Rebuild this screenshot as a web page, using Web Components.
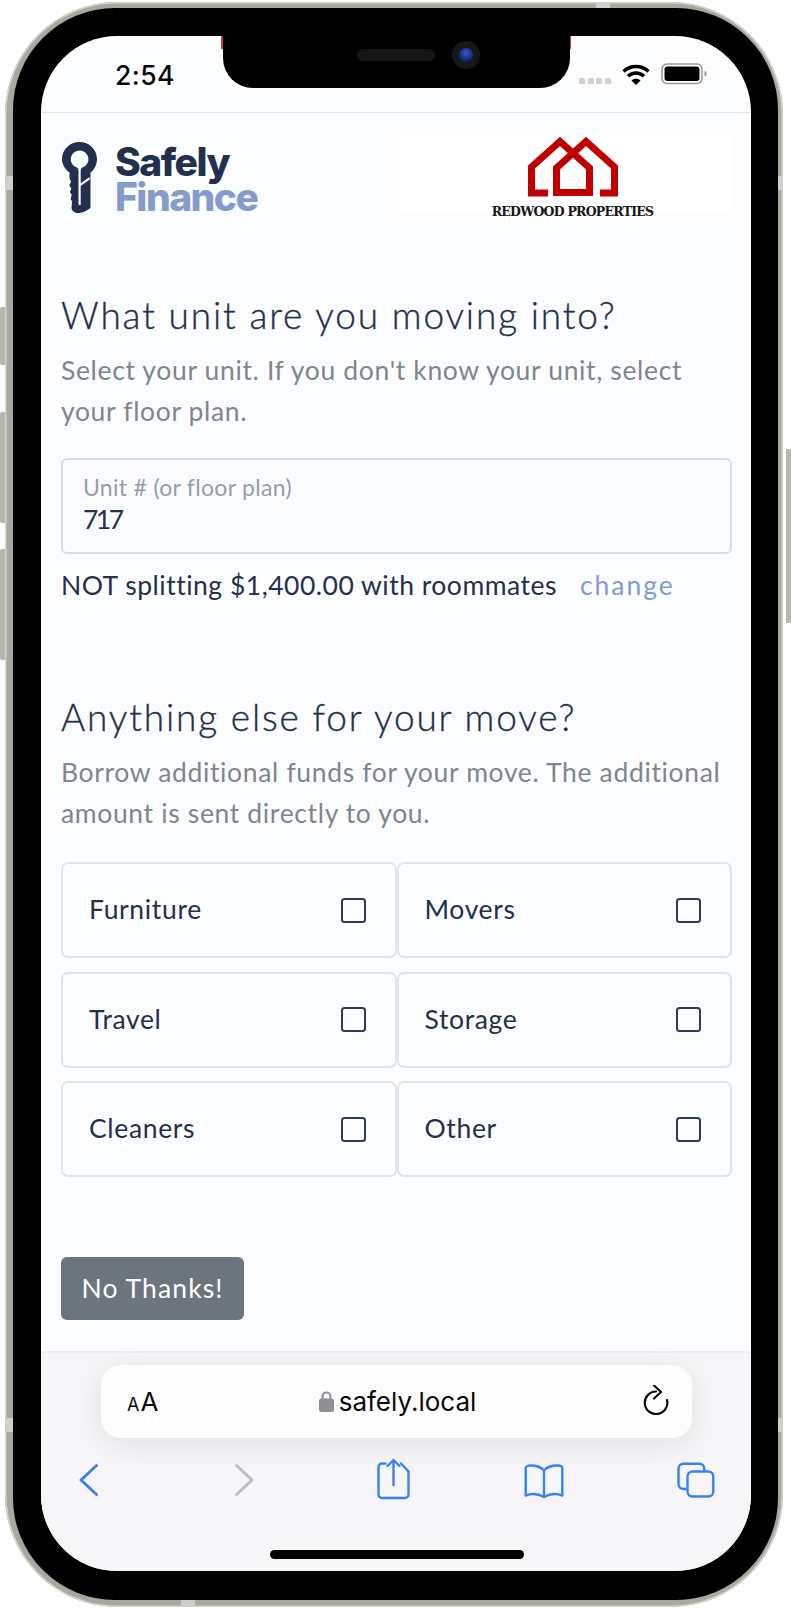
<!DOCTYPE html>
<html><head><meta charset="utf-8"><title>Safely Finance</title>
<style>
html,body{margin:0;padding:0;background:#fff;height:1608px;overflow:hidden}
body{font-family:"Lato","Noto Sans",sans-serif;color:#232f4d}
</style></head><body>
<phone-frame>
  <status-bar slot="status"></status-bar>
  <app-header></app-header>
  <form-section heading="What unit are you moving into?" top="0">Select your unit. If you don't know your unit, select your floor plan.</form-section>
  <unit-field label="Unit # (or floor plan)" value="717"></unit-field>
  <split-note text="NOT splitting $1,400.00 with roommates" link="change"></split-note>
  <form-section heading="Anything else for your move?" top="90">Borrow additional funds for your move. The additional amount is sent directly to you.</form-section>
  <choice-grid>
    <choice-card>Furniture</choice-card><choice-card>Movers</choice-card>
    <choice-card>Travel</choice-card><choice-card>Storage</choice-card>
    <choice-card>Cleaners</choice-card><choice-card>Other</choice-card>
  </choice-grid>
  <plain-button>No Thanks!</plain-button>
  <safari-bar slot="bar"></safari-bar>
</phone-frame>
<script>
function def(name, css, html){
  customElements.define(name, class extends HTMLElement{
    connectedCallback(){
      if(this.shadowRoot) return;
      const r=this.attachShadow({mode:'open'});
      const get=k=>this.getAttribute(k)||'';
      r.innerHTML='<style>'+css+'</style>'+(typeof html==='function'?html(get):html);
    }
  });
}
def('phone-frame',`
:host{display:block;position:relative;width:791px;height:1608px;box-sizing:border-box;padding:2px 8px 1px 5px}
.frame{box-sizing:border-box;height:1605px;background:#a7a89e;border-radius:112px;padding:6px 5px 7px 8px;box-shadow:inset 0 0 0 1.5px #d4d5cf}
.black{box-sizing:border-box;height:100%;background:#000;border-radius:102px;padding:28px 27px 29px 28px}
.screen{position:relative;height:100%;border-radius:76px;overflow:hidden;background:#fcfdff;display:flex;flex-direction:column}
.main{flex:1;min-height:0;padding:0 19px 0 20px;display:flex;flex-direction:column}
.notch{position:absolute;left:182px;top:0;width:347px;height:52px;background:#000;border-radius:0 0 30px 30px}
.red{position:absolute;top:0;width:2px;height:13px;background:#d0392b}
.speaker{position:absolute;left:134px;top:13px;width:78px;height:12px;border-radius:6px;background:#151515}
.cam{position:absolute;left:229px;top:5px;width:28px;height:28px;border-radius:50%;background:#15171c}
.cam i{position:absolute;left:7px;top:7px;width:14px;height:14px;border-radius:50%;background:radial-gradient(circle at 50% 35%,#3a56c0 0,#1b2c80 55%,#0a1030 100%)}
.btn{position:absolute;left:0;width:5px;background:#b4b5ac;border-radius:2px 0 0 2px}
.rbtn{position:absolute;right:0;top:449px;width:5px;height:174px;background:#b4b5ac;border-radius:0 2px 2px 0}
.band{position:absolute;background:#cfd0ca}
`,`<div class="btn" style="top:307px;height:58px"></div><div class="btn" style="top:412px;height:111px"></div><div class="btn" style="top:549px;height:111px"></div><div class="rbtn"></div>
<div class="band" style="left:5px;top:176px;width:8px;height:14px"></div><div class="band" style="left:5px;top:1418px;width:8px;height:14px"></div>
<div class="band" style="left:778px;top:176px;width:5px;height:14px"></div><div class="band" style="left:778px;top:1418px;width:5px;height:14px"></div>
<div class="band" style="left:596px;top:2px;width:14px;height:6px"></div><div class="band" style="left:181px;top:1600px;width:14px;height:7px"></div>
<div class="frame"><div class="black"><div class="screen">
<slot name="status"></slot>
<div class="main"><slot></slot></div>
<slot name="bar"></slot>
<div class="red" style="left:180px"></div><div class="red" style="left:528px"></div>
<div class="notch"><div class="speaker"></div><div class="cam"><i></i></div></div>
</div></div></div>`);

def('status-bar',`
:host{display:flex;flex:none;box-sizing:border-box;height:77px;border-bottom:1px solid #e4e6ea;padding:23px 47px 0 74px;align-items:flex-start;font-family:Inter,sans-serif}
.t{font-size:26.500px;font-weight:500;line-height:32px;color:#0a0a0a;letter-spacing:.4px}
.r{margin-left:auto;display:flex;align-items:flex-start;gap:0;margin-top:-1px}
.dots{display:flex;gap:2.700px;margin:20px 11px 0 0}.dots i{width:6px;height:6px;border-radius:1.500px;background:#d0d0d2}
svg{display:block}
`,`<div class="t">2:54</div><div class="r"><div class="dots"><i></i><i></i><i></i><i></i></div>
<svg width="28" height="22" viewBox="0 0 28 22" style="margin:6px 11px 0 0"><path d="M1.500 7.500C8.500 .8 19.500 .8 26.500 7.500" fill="none" stroke="#000" stroke-width="3.400"/><path d="M6 12.200C10.600 8 17.400 8 22 12.200" fill="none" stroke="#000" stroke-width="3.400"/><path d="M14 21l-4.600-4.600c2.600-2.200 6.600-2.200 9.200 0z" fill="#000"/></svg>
<svg width="47" height="22" viewBox="0 0 47 22" style="margin:5px -4px 0 0"><rect x="1" y="1" width="40" height="19.500" rx="5" fill="none" stroke="#9a9a9a" stroke-width="1.600"/><rect x="3.500" y="3.500" width="35" height="14.500" rx="3" fill="#000"/><path d="M43.500 8c1.600.5 2 1.400 2 2.700s-.4 2.200-2 2.700z" fill="#9a9a9a"/></svg></div>`);

def('app-header',`
:host{display:flex;flex:none;height:180px;box-sizing:border-box;align-items:flex-start;justify-content:space-between;padding-top:21px}
.l{display:flex;margin:8px 0 0 1px;gap:18px}
.w{font-family:Inter,sans-serif;font-weight:800;font-size:39px;line-height:35px;letter-spacing:-1.500px;padding-top:2px}
.w span{display:block;color:#232f4d}.w b{display:block;font-weight:800;color:#859bcb}
.box{box-sizing:border-box;width:338px;height:77px;background:#fff;padding-top:3px;display:flex;flex-direction:column;align-items:center}
.box svg{display:block;flex:none;margin-left:26px}
.n{font-family:"DejaVu Serif",serif;font-weight:700;font-size:12.500px;line-height:16px;margin-top:7px;color:#161616;white-space:nowrap;margin-left:19px;letter-spacing:-.75px}
`,`<div class="l"><svg width="35" height="72" viewBox="0 0 35 72" style="display:block"><path fill="#232f4d" fill-rule="evenodd" d="M17.500 0C27 0 35 7.500 35 17c0 6-3 11-6.500 13.500V66c-3 2-6 4.500-11 5-4.500.4-8-2-8-5.500l.6-6-1.600-2.500 1.300-4-2-3 1.600-3.500-2.200-3 1.800-3.500L7.500 36v-5.500C3 27 0 22.500 0 17 0 7.500 8 0 17.500 0zM17.500 8.500a8.700 8.700 0 0 0-3.200 16.800c1.500.6 2.200 1.500 2.200 3V63h2.200V44l9-6.500v-2.500l-9 6.200V28.300c0-1.500.7-2.400 2.200-3a8.700 8.700 0 0 0-3.400-16.800z"/></svg>
<div class="w"><span>Safely</span><b>Finance</b></div></div>
<div class="box"><svg width="96" height="60" viewBox="0 0 96 60"><path d="M20 56H3.500V30L32 4.500 61.500 31V55.500H28.500V31L58 4.500 86.500 30V56H72" fill="none" stroke="#c00000" stroke-width="7" stroke-linejoin="miter"/></svg><div class="n">REDWOOD PROPERTIES</div></div>`);

def('form-section',`
:host{display:block;flex:none}
h2{margin:0;font-weight:300;font-size:37px;line-height:44px;color:#232f4d;letter-spacing:1.850px;-webkit-text-stroke:.35px #232f4d}
p{margin:13px 0 0;font-size:26.500px;line-height:40.500px;color:#7f858e;letter-spacing:.65px}
`,g=>`<style>:host{margin-top:${g('top')}px}</style><h2>${g('heading')}</h2><p><slot></slot></p>`);

def('unit-field',`
:host{display:block;flex:none;box-sizing:border-box;height:96px;margin-top:27px;border:2px solid #d9dce2;border-radius:6px;padding:13px 20px 0;background:#fbfcfe}
.l{font-size:23px;line-height:28px;color:#969cab;letter-spacing:.3px}
.v{font-size:26.500px;line-height:32px;color:#232f4d;margin-top:2px;letter-spacing:-2.500px}
`,g=>`<div class="l">${g('label')}</div><div class="v">${g('value')}</div>`);

def('split-note',`
:host{display:flex;flex:none;margin-top:11px;height:40px;align-items:center;font-size:26.500px;letter-spacing:.5px;gap:23px;color:#232f4d}
.c{color:#859bcb;letter-spacing:2px}
`,g=>`<span>${g('text')}</span><span class="c">${g('link')}</span>`);

def('choice-grid',`
:host{display:grid;flex:none;margin-top:29px;grid-template-columns:1fr 1fr;grid-auto-rows:96px;row-gap:13.500px}
`,`<slot></slot>`);

def('choice-card',`
:host{display:flex;box-sizing:border-box;align-items:center;justify-content:space-between;border:2px solid #e2e4e8;border-radius:7px;padding:0 29px 0 26px;font-size:26.500px;letter-spacing:.65px;color:#232f4d}
span{padding-bottom:2px}
.c{box-sizing:border-box;width:25px;height:25px;border:2.500px solid #2d3a58;border-radius:3.500px}
`,`<span><slot></slot></span><div class="c"></div>`);

def('plain-button',`
:host{display:flex;flex:none;align-self:flex-start;margin-top:80px;box-sizing:border-box;width:183px;height:63px;padding-bottom:2px;align-items:center;justify-content:center;background:#6c757d;border-radius:6px;color:#fff;font-size:26.500px;letter-spacing:1.100px}
`,`<slot></slot>`);

def('safari-bar',`
:host{display:block;flex:none;box-sizing:border-box;height:220px;position:relative;background:#f6f6f8;border-top:2px solid #eeeef0;font-family:Inter,sans-serif}
.pill{box-sizing:border-box;margin:12px 59px 0 60px;height:73px;border-radius:20px;background:#fdfdfd;box-shadow:0 6px 30px rgba(0,0,0,.09);display:flex;align-items:center;padding:0 22px 0 26px;color:#0a0a0a}
.aa{width:70px;white-space:nowrap;font-size:26px}.aa small{font-size:18px;margin-right:1px}
.u{flex:1;display:flex;align-items:center;justify-content:center;gap:5px;font-size:26px;margin-left:-44px}
.row{display:flex;justify-content:space-between;padding:0 25.500px 0 18px;margin-top:12px}
.row svg{display:block;width:60px;height:60px}
.home{position:absolute;left:229px;top:197px;width:254px;height:9px;border-radius:5px;background:#000}
`,`<div class="pill"><div class="aa"><small>A</small>A</div>
<div class="u"><svg width="15" height="21" viewBox="0 0 15 21"><path d="M3.500 8V5.500a4 4 0 0 1 8 0V8" fill="none" stroke="#8e8e93" stroke-width="2"/><rect y="7.500" width="15" height="13.500" rx="2.500" fill="#8e8e93"/></svg><span>safely.local</span></div>
<svg width="28" height="30" viewBox="0 0 28 30" style="margin-top:-4px"><path d="M14 6.500A11.300 11.300 0 1 0 25 15" fill="none" stroke="#0a0a0a" stroke-width="2.200" stroke-linecap="round"/><path d="M12 .5L19 7l-7 6.500" fill="none" stroke="#0a0a0a" stroke-width="2.200" stroke-linecap="round" stroke-linejoin="round"/></svg></div>
<div class="row">
<svg viewBox="0 0 60 60"><path d="M37.500 15.500L22 30l15.500 14.500" fill="none" stroke="#3780f6" stroke-width="3" stroke-linecap="round" stroke-linejoin="round"/></svg>
<svg viewBox="0 0 60 60"><path d="M25.500 15.500L41 30 25.500 44.500" fill="none" stroke="#bdbdbf" stroke-width="3" stroke-linecap="round" stroke-linejoin="round"/></svg>
<svg viewBox="0 0 60 60"><g transform="translate(1.500 0)"><path d="M22 13.500h-3.500a3.500 3.500 0 0 0-3.500 3.500v27.500a3.500 3.500 0 0 0 3.500 3.500h23a3.500 3.500 0 0 0 3.500-3.500V21.500L37.500 13.500" fill="none" stroke="#3780f6" stroke-width="2.400" stroke-linecap="round"/><path d="M30 35V10M24 16l6-6 6 6" fill="none" stroke="#3780f6" stroke-width="2.400" stroke-linecap="round" stroke-linejoin="round"/></g></svg>
<svg viewBox="0 0 60 60"><path d="M30 20.500c-3-3.500-7.500-5-13.500-5-2 0-4.800.5-4.800 2.500v27.500c5.500-2 13-1.500 18.300 1.500 5.300-3 12.800-3.500 18.300-1.500V18c0-2-2.800-2.500-4.800-2.500-6 0-10.500 1.500-13.500 5zM30 20.500V47" fill="none" stroke="#3780f6" stroke-width="2.400" stroke-linejoin="round"/></svg>
<svg viewBox="0 0 60 60"><path d="M20.500 39h-3a5 5 0 0 1-5-5V18.700a5 5 0 0 1 5-5h15.800a5 5 0 0 1 5 5v2.500" fill="none" stroke="#3780f6" stroke-width="2.400"/><rect x="21.500" y="21.500" width="25.800" height="25" rx="5" fill="none" stroke="#3780f6" stroke-width="2.400"/></svg>
</div><div class="home"></div>`);
</script>
</body></html>
